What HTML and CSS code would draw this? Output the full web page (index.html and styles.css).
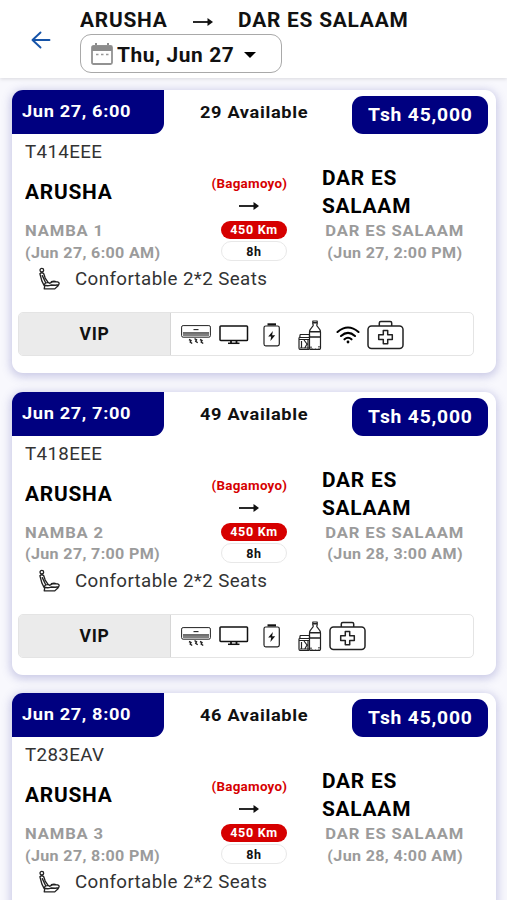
FILE: index.html
```
<!DOCTYPE html>
<html lang="en">
<head>
<meta charset="utf-8">
<title>Trips</title>
<link rel="stylesheet" href="styles.css">
</head>
<body>
<svg class="defs" aria-hidden="true">
  <symbol id="arrow" viewBox="0 0 20 8"><path d="M0 4h17" fill="none" stroke="currentColor" stroke-width="1.800"/><path d="M14.500 0L20 4l-5.500 4z" fill="currentColor"/></symbol>
  <symbol id="seat" viewBox="0 0 24 24" fill="none" stroke="#222" stroke-width="1.400" stroke-linecap="round" stroke-linejoin="round"><circle cx="4" cy="2.800" r="1.900"/><path d="M2 6.500Q4 4.500 6 6.500L7.500 11L10.500 15.500M2 6.500L4 14L6.500 19M4.500 8.500L8 16M10.500 15.500Q6.500 16 6.500 18.500Q10 19.700 13.500 18.300L18 18.500L21.500 18Q23 16 20.500 15H15L12 16.500zM7 19.500L6.500 22.300H17.500L21 19M14 14.800Q17 13.500 19 15"/></symbol>
  <symbol id="ac" viewBox="0 0 30 20" fill="none" stroke="#222"><rect x=".6" y=".6" width="28.800" height="11.600" rx="1.500" stroke-width="1"/><path d="M2 9.500h26" stroke="#808080" stroke-width="3.200"/><path d="M2 7.700h26" stroke-width=".8"/><path d="M12.500 4.600h5" stroke-width="1.100"/><path d="M8 14.500l2 1-.8 1.500 2 1.500M13.500 13.700l2 1-.8 1.500 2 1.500M19 14.500l2 1-.8 1.500 2 1.500" stroke-width="1.400"/></symbol>
  <symbol id="tv" viewBox="0 0 30 20"><rect x="1" y="1" width="27.500" height="14.500" rx=".8" fill="none" stroke="#111" stroke-width="1.500"/><path d="M12 15.500v2.500M17.500 15.500v2.500" stroke="#111" stroke-width="1.800"/><path d="M9 18.300h11.500" stroke="#111" stroke-width="1.500"/></symbol>
  <symbol id="battery" viewBox="0 0 18 24"><rect x="1" y="3" width="15.300" height="19.800" rx="1.700" fill="none" stroke="#222" stroke-width="1.200"/><path d="M4.500.3h8.500v2.200H4.500z" fill="#111"/><path d="M9.900 8L5.200 13.500h3l-.8 4.500L12.200 12.300H9.100z" fill="#111"/></symbol>
  <symbol id="snack" viewBox="0 0 24 30" fill="none" stroke="#222" stroke-width="1.200" stroke-linejoin="round"><path d="M14.800 1h4.400v3l-.5 1c0 2 3.800 3.200 3.800 7v16q0 1.500-1.500 1.500h-8q-1.500 0-1.500-1.500V12c0-3.800 3.800-5 3.800-7l-.5-1z"/><path d="M14.800 2.800h4.400M12 11.700h10M12 17h10" stroke-width="1.600"/><path d="M13 26.500v2.500h8v-3" stroke-dasharray="2 1"/><path d="M2 14.500h9.500v2.300L11 18M2 14.500v2l-1 1.500v10q0 1.500 1.500 1.500h9M2 17.500h9M1.500 19.500h10M3.500 21v7M6 20l3 4-2.500 4.500M10 20v9M2 28h9"/></symbol>
  <symbol id="wifi" viewBox="0 0 24 18" fill="none" stroke="#000" stroke-width="2.100" stroke-linecap="round"><path d="M1.500 6Q12-3 22.500 6M5 10Q12 3.800 19 10M8.500 13.300Q12 10.200 15.500 13.300"/><circle cx="12" cy="16" r="1.400" fill="#000" stroke="none"/></symbol>
  <symbol id="kit" viewBox="0 0 37 30" fill="none" stroke="#222" stroke-width="1.500" stroke-linejoin="round"><rect x="1" y="6" width="35" height="22.500" rx="3.500"/><path d="M12.300 6V3q0-1.500 1.500-1.500h9.400q1.500 0 1.500 1.500v3M16.300 10.500h4.400v4.300h4.600v4.600h-4.600v4.300h-4.400v-4.300h-4.600v-4.600h4.600z"/></symbol>
</svg>

<header class="topbar">
  <svg class="back" viewBox="0 0 20 18"><path d="M19 9H2M10 1.500L2 9l8 7.500" fill="none" stroke="#1553a8" stroke-width="1.900" stroke-linecap="round" stroke-linejoin="round"/></svg>
  <div class="search">
    <div class="path"><span class="path-from wide">ARUSHA</span><svg class="path-arrow"><use href="#arrow"/></svg><span class="path-to wide">DAR ES SALAAM</span></div>
    <button class="picker">
      <svg class="calendar" viewBox="0 0 22 22"><path d="M5 0v4M17 0v4" stroke="#8c8c8c" stroke-width="2"/><rect x="1" y="3" width="20" height="18" rx="1.500" fill="#fff" stroke="#929292" stroke-width="1.800"/><path d="M1 3h20v5H1z" fill="#8c8c8c"/><path d="M5 11.500h2.500M10 11.500h2.500M15 11.500h2.500" stroke="#999" stroke-width="1.600"/></svg>
      <span class="picker-text wide">Thu, Jun 27</span>
      <svg class="caret" viewBox="0 0 12 6"><path d="M0 0h12L6 6z"/></svg>
    </button>
  </div>
</header>

<main class="trips">
  <article class="trip">
    <div class="head"><div class="departs"><div class="wide">Jun 27, 6:00</div></div><div class="free"><div class="wide">29 Available</div></div><div class="price"><div class="wide">Tsh 45,000</div></div></div>
    <div class="plate"><div class="wide">T414EEE</div></div>
    <div class="route">
      <div class="from"><div class="city wide">ARUSHA</div><div class="stop wide">NAMBA 1</div><div class="time wide">(Jun 27, 6:00 AM)</div></div>
      <div class="via"><div class="via-name">(Bagamoyo)</div><svg class="via-arrow"><use href="#arrow"/></svg><div class="pill km">450 Km</div><div class="pill hours">8h</div></div>
      <div class="to"><div class="city wide">DAR ES SALAAM</div><div class="stop wide">DAR ES SALAAM</div><div class="time wide">(Jun 27, 2:00 PM)</div></div>
    </div>
    <div class="seats"><svg class="seat"><use href="#seat"/></svg><div class="wide">Confortable 2*2 Seats</div></div>
    <div class="amenities"><div class="class">VIP</div><div class="icons"><svg class="ac"><use href="#ac"/></svg><svg class="tv"><use href="#tv"/></svg><svg class="battery"><use href="#battery"/></svg><svg class="snack"><use href="#snack"/></svg><svg class="wifi"><use href="#wifi"/></svg><svg class="kit"><use href="#kit"/></svg></div></div>
  </article>

  <article class="trip">
    <div class="head"><div class="departs"><div class="wide">Jun 27, 7:00</div></div><div class="free"><div class="wide">49 Available</div></div><div class="price"><div class="wide">Tsh 45,000</div></div></div>
    <div class="plate"><div class="wide">T418EEE</div></div>
    <div class="route">
      <div class="from"><div class="city wide">ARUSHA</div><div class="stop wide">NAMBA 2</div><div class="time wide">(Jun 27, 7:00 PM)</div></div>
      <div class="via"><div class="via-name">(Bagamoyo)</div><svg class="via-arrow"><use href="#arrow"/></svg><div class="pill km">450 Km</div><div class="pill hours">8h</div></div>
      <div class="to"><div class="city wide">DAR ES SALAAM</div><div class="stop wide">DAR ES SALAAM</div><div class="time wide">(Jun 28, 3:00 AM)</div></div>
    </div>
    <div class="seats"><svg class="seat"><use href="#seat"/></svg><div class="wide">Confortable 2*2 Seats</div></div>
    <div class="amenities"><div class="class">VIP</div><div class="icons"><svg class="ac"><use href="#ac"/></svg><svg class="tv"><use href="#tv"/></svg><svg class="battery"><use href="#battery"/></svg><svg class="snack"><use href="#snack"/></svg><svg class="kit"><use href="#kit"/></svg></div></div>
  </article>

  <article class="trip">
    <div class="head"><div class="departs"><div class="wide">Jun 27, 8:00</div></div><div class="free"><div class="wide">46 Available</div></div><div class="price"><div class="wide">Tsh 45,000</div></div></div>
    <div class="plate"><div class="wide">T283EAV</div></div>
    <div class="route">
      <div class="from"><div class="city wide">ARUSHA</div><div class="stop wide">NAMBA 3</div><div class="time wide">(Jun 27, 8:00 PM)</div></div>
      <div class="via"><div class="via-name">(Bagamoyo)</div><svg class="via-arrow"><use href="#arrow"/></svg><div class="pill km">450 Km</div><div class="pill hours">8h</div></div>
      <div class="to"><div class="city wide">DAR ES SALAAM</div><div class="stop wide">DAR ES SALAAM</div><div class="time wide">(Jun 28, 4:00 AM)</div></div>
    </div>
    <div class="seats"><svg class="seat"><use href="#seat"/></svg><div class="wide">Confortable 2*2 Seats</div></div>
  </article>
</main>
</body>
</html>
```
FILE: styles.css
```
* { box-sizing: border-box; }
html, body { height: 900px; overflow: hidden; }
body { margin: 0; background: #f8f8fd; font-family: Roboto, "Liberation Sans", sans-serif; color: #111; white-space: nowrap; display: flex; flex-direction: column; }
svg { display: block; flex: none; }
.defs { display: none; }
.wide { transform: scaleX(1.07); transform-origin: left center; }

.topbar { flex: none; height: 78px; background: #fff; display: flex; padding: 8px 0 0 30px; box-shadow: 0 1px 4px rgba(0,0,0,.13); }
.back { width: 21px; height: 18px; margin-top: 23px; }
.search { margin-left: 29px; }
.path { display: flex; align-items: center; height: 24px; padding-top: 1px; font-weight: 700; font-size: 19.500px; letter-spacing: .73px; }
.path-from { width: 88px; }
.path-arrow { width: 20px; height: 8px; margin: 3px 0 0 25px; }
.path-to { margin-left: 25px; }
.picker { display: flex; align-items: center; width: 202px; height: 39px; margin-top: 2px; padding: 3px 0 0 10px; background: #fff; border: 1px solid #a9a9a9; border-radius: 11px; font: 700 19.500px Roboto, sans-serif; color: #111; letter-spacing: .55px; }
.calendar { width: 22px; height: 22px; margin-top: -2px; }
.picker-text { width: 117px; margin-left: 4px; text-align: left; }
.caret { width: 12px; height: 6px; margin: -1px 0 0 10px; }

.trips { padding: 12px 11px 0 12px; display: flex; flex-direction: column; gap: 18.500px; }
.trip { flex: none; height: 283px; background: #fff; border-radius: 11px; box-shadow: 0 2px 8px 2px rgba(80,80,170,.27); }
.head { display: flex; height: 44px; font-weight: 700; }
.departs { width: 152px; height: 44px; padding-left: 10px; line-height: 43px; background: #000080; color: #fff; border-radius: 11px 0 11px 0; font-size: 17px; letter-spacing: .6px; }
.free { width: 188px; padding-left: 36px; line-height: 44px; font-size: 17px; letter-spacing: .62px; }
.price { width: 136px; height: 38px; margin-top: 6px; padding-left: 16px; line-height: 38px; background: #000080; color: #fff; border-radius: 11px; font-size: 18px; letter-spacing: .76px; }
.plate { height: 30px; padding: 6px 0 0 13px; line-height: 24px; font-size: 17.500px; color: #333; letter-spacing: .35px; }

.route { display: grid; grid-template-columns: 170px 128px 1fr; height: 98px; padding-left: 13px; }
.city { display: flex; align-items: center; height: 57px; padding-top: 1px; width: 115px; white-space: normal; font-size: 19.500px; line-height: 28px; font-weight: 700; letter-spacing: .7px; color: #000; }
.stop, .time { height: 21.500px; line-height: 21px; font-weight: 700; color: #9b9b9b; }
.stop { font-size: 15.500px; letter-spacing: .82px; }
.time { height: 20px; line-height: 20px; font-size: 15px; letter-spacing: .33px; }
.to { margin-left: -1px; }
.to .stop { padding-left: 3px; }
.to .time { padding-left: 5px; }
.via { display: flex; flex-direction: column; align-items: center; padding: 10px 20px 0 0; }
.via-name { height: 19px; line-height: 19px; font-size: 12.500px; font-weight: 700; color: #d60000; letter-spacing: .25px; transform: scaleX(1.07); }
.via-arrow { width: 20px; height: 8px; margin-top: 9px; }
.pill { width: 66px; margin-left: 10px; border-radius: 10px; text-align: center; font-size: 12.500px; font-weight: 700; letter-spacing: .7px; }
.km { height: 18px; line-height: 18px; margin-top: 11px; background: #d60000; color: #fff; }
.hours { height: 20px; line-height: 19px; margin-top: 2px; border: 1px solid #e8e8e8; }

.seats { display: flex; height: 34px; padding: 6px 0 0 26px; font-size: 17.500px; line-height: 22px; color: #333; letter-spacing: .37px; }
.seat { width: 23px; height: 24px; margin: -1px 14px 0 0; }
.amenities { display: flex; width: 456px; height: 44px; margin: 16px 0 0 6px; border: 1px solid #e4e4e4; border-radius: 5px; }
.class { width: 152px; background: #ebebeb; border-right: 1px solid #d6d6d6; border-radius: 4px 0 0 4px; text-align: center; font-size: 17.500px; line-height: 43px; font-weight: 700; letter-spacing: .7px; }
.icons { display: flex; align-items: center; padding: 1px 0 0 10px; }
.ac { width: 30px; height: 20px; margin-top: 1px; }
.tv { width: 30px; height: 20px; margin-left: 8px; }
.battery { width: 18px; height: 24px; margin-left: 14px; }
.snack { width: 24px; height: 30px; margin-left: 17px; }
.wifi { width: 24px; height: 18px; margin-left: 14px; }
.kit { width: 37px; height: 30px; margin-left: 7px; }
```
